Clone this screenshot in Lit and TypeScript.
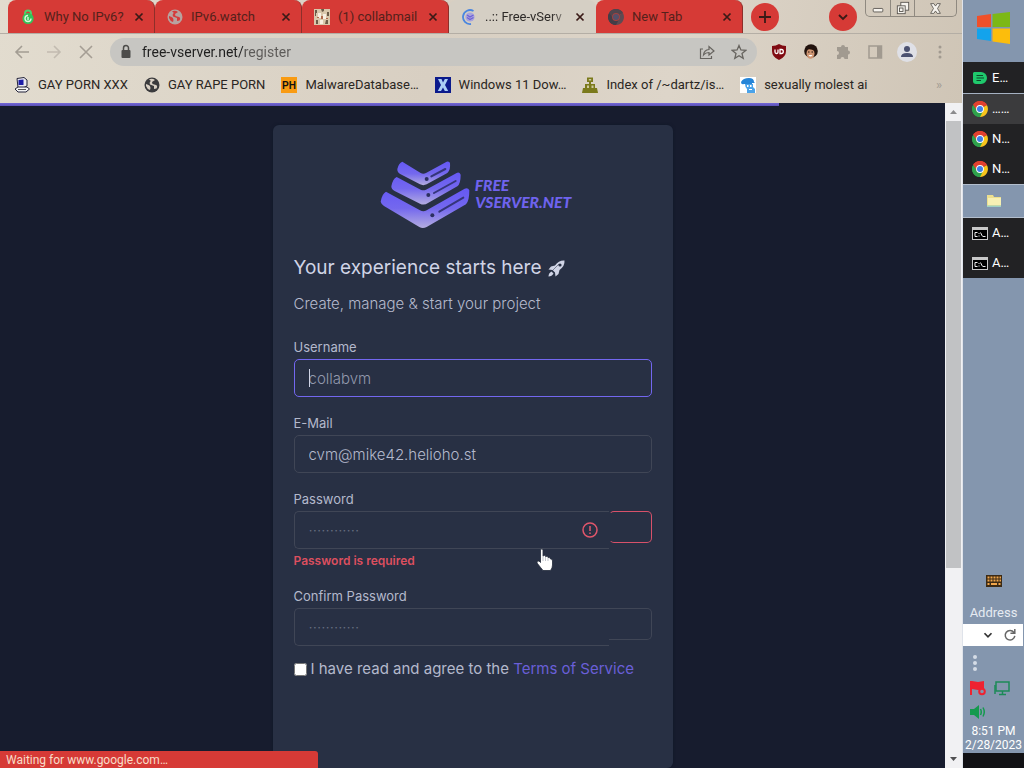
import { LitElement, html, svg, css, nothing } from "lit";
import { customElement } from "lit/decorators.js";
import { classMap } from "lit/directives/class-map.js";
import { styleMap } from "lit/directives/style-map.js";

const icon = (body: unknown, size = 16, box = "0 0 16 16") =>
  html`<svg class="icon" width=${size} height=${size} viewBox=${box} aria-hidden="true">${body}</svg>`;

const chromeLogo = (a: string, b: string, c: string, d: string, ring: string) => svg`
  <path fill=${a} d="M8 8 L1.1 4 A8 8 0 0 1 14.9 4 Z"/>
  <path fill=${b} d="M8 8 L14.9 4 A8 8 0 0 1 8 16 Z"/>
  <path fill=${c} d="M8 8 L8 16 A8 8 0 0 1 1.1 4 Z"/>
  <path fill=${a} d="M8 4.3 H15.1 L14.9 4 A8 8 0 0 0 1.1 4 L4.8 9.8 Z"/>
  <path fill=${c} d="M4.8 9.8 L8 11.7 L11.2 9.8 L8 16 A8 8 0 0 1 1.1 4 Z"/>
  <circle cx="8" cy="8" r="3.9" fill=${ring}/><circle cx="8" cy="8" r="3" fill=${d}/>`;

const closeGlyph = svg`<path d="M4 4 L12 12 M12 4 L4 12" stroke="currentColor" stroke-width="2" fill="none"/>`;

const globe = (bg: string, fg: string) => svg`
  <circle cx="8" cy="8" r="7.5" fill=${bg}/>
  <path fill=${fg} d="M2 7 Q5 8 6 9 Q7 11 6 13 Q3 12 2 9 Z M5 2.5 Q8 1 11 3 L8 5 L8.5 7 L12 8 Q14 9 12.5 11.5 L10 12 L10 9 L6 7.5 Q5 5 7 4 Z"/>`;

const tabs = [
  {
    title: "Why No IPv6?",
    icon: svg`<path d="M5 6 V4.5 A3 3 0 0 1 11 4.5 V6" fill="none" stroke="#4fd06a" stroke-width="2"/><circle cx="8" cy="9.5" r="5.6" fill="#35c25a"/><path d="M8 6.500 A3 3 0 1 0 11 9.500 M8 8 V11" fill="none" stroke="#d8f6d8" stroke-width="1.4"/>`,
  },
  { title: "IPv6.watch", icon: globe("#b8a29f", "#d63a3a") },
  {
    title: "(1) collabmail",
    icon: svg`<rect width="16" height="16" fill="#d9c8ab"/><path fill="#6b5c48" d="M1 1 h2 v3 h-1 v3 h-1z M7 0 h3 v2 l-2 1z M13 3 h2 v4 h-2z M2 11 h2 v4 h-2z M12 11 h2 v4 h-3z"/><path fill="#f7efe0" d="M4 4 h3 v5 h-3z M9 5 h3 v5 h-3z M6 11 h3 v4 h-3z"/><path fill="#b06a4c" d="M7 7 h2 v3 h-2z M3 8 h2 v1 h-2z M12 9 h2 v1 h-2z"/>`,
  },
  {
    title: "..:: Free-vServ",
    active: true,
    icon: svg`<path d="M12.5 2 A7 7 0 1 0 10 15" fill="none" stroke="#4a86e0" stroke-width="1.8"/><circle cx="9" cy="8" r="4.6" fill="#a9a4dc"/><path d="M6 6 L9 8 L12.5 6 M6 8.5 L9 10.5 L12.5 8.5" fill="none" stroke="#6d61d8" stroke-width="1.3"/>`,
  },
  { title: "New Tab", icon: chromeLogo("#50454d", "#5d4a52", "#443d47", "#54506a", "#a5413f") },
];

const bookmarks = [
  {
    title: "GAY PORN XXX",
    icon: svg`<path d="M3 1.5 L10 0.5 L13 3 V9 L10 10.5 H4 Z" fill="#e9e9ef" stroke="#23233a"/><path d="M4.5 3 L9.5 2.5 V8 H4.5 Z" fill="#1d1da8"/><path d="M1 12 L4 10 H13 L15.5 12 L12 15 H4 Z" fill="#f4f4f4" stroke="#23233a"/><path d="M4 12.5 H12" stroke="#555"/>`,
  },
  { title: "GAY RAPE PORN", icon: globe("#3b3b3d", "#d9d0c4") },
  {
    title: "MalwareDatabase…",
    icon: svg`<rect width="16" height="16" fill="#f99b12"/><text x="8" y="12" text-anchor="middle" font-family="Liberation Sans, sans-serif" font-weight="700" font-size="10" fill="#111">PH</text>`,
  },
  {
    title: "Windows 11 Dow…",
    icon: svg`<rect width="16" height="16" fill="#0b1a8c"/><path d="M3 2 H6.5 L8 5.5 L9.8 2 H13 L10 8 L13.2 14 H9.8 L8 10.5 L6 14 H2.8 L6 8 Z" fill="#a9cdf5"/>`,
  },
  {
    title: "Index of /~dartz/is…",
    icon: svg`<g fill="#7b7a1c"><path d="M5 0.5 H11 V5 H5 Z"/><path d="M7 5 H9 V7 H13 V11 H3 V7 H7 Z"/><path d="M1 11 H15 L16 16 H0 Z"/></g><path d="M6.8 2 H9.2 V3.6 H6.8 Z M5 8.5 H7 V11 H5 Z M9.5 8.5 H11.5 V11 H9.5 Z" fill="#cfc9a0"/>`,
  },
  {
    title: "sexually molest ai",
    icon: svg`<rect width="16" height="16" fill="#fff"/><path d="M1 5 Q3 1 9 1 Q14 1 14 5 L15 6 H12 V7 H4 Q1 8 1 5 Z" fill="#2585d8"/><path d="M5 7 H13 V10 L15 12 V16 H7 V12 Q5 10 5 7 Z" fill="#4aa3ea"/><path d="M7 8 h1.5 v2 h-1.5z M10 8 h1.5 v2 h-1.5z M9 12 h3 v1 h-3z" fill="#fff"/>`,
  },
];

const colourChrome = chromeLogo("#e2402f", "#f8c51c", "#2fa24c", "#3f7fe8", "#fff");
const terminal = svg`<rect y="2" width="16" height="13" fill="#c9c9c9"/><rect x="1" y="5" width="14" height="9" fill="#000"/><path d="M5.5 7.5 H3 V11.5 H5.5 M7 8 v1 M7 10.5 v1 M8.5 7.5 L10.5 11.5 M11 11.5 h2.5" stroke="#eee" fill="none"/>`;
const folder = svg`<path d="M1 2 H7 L8 4 H15 V14 H1 Z" fill="#ecdf8e"/><path d="M2 5 H15 V12 H2 Z" fill="#f7f0b4"/><path d="M1 12.5 H15 V14 H1Z" fill="#9fd0c4"/>`;

const tasks = [
  { label: "E…", look: "first", icon: svg`<path d="M2 2 H9 A6 6 0 0 1 9 14 H4 Q1 14 1 11 V3 Z" fill="#1fc96c"/><path d="M4.5 5.5 H11 M4.5 8 H12 M4.5 10.5 H9" stroke="#0b4a2a" stroke-width="1.2"/>` },
  { label: "……", look: "current", icon: colourChrome },
  { label: "N…", look: "", icon: colourChrome },
  { label: "N…", look: "", icon: colourChrome },
  { label: "", look: "folder", icon: folder },
  { label: "A…", look: "", icon: terminal },
  { label: "A…", look: "", icon: terminal },
];

@customElement("browser-chrome")
class BrowserChrome extends LitElement {
  static styles = css`
    :host {
      display: block;
      font: 13px/20px Roboto, "Liberation Sans", sans-serif;
      color: #2a2622;
      background: linear-gradient(100deg, #e2dccf, #d8cfc2 45%, #ddd5c9 70%, #cfc5b6);
    }
    button {
      font: inherit;
      color: inherit;
      background: none;
      border: 0;
      padding: 0;
    }
    .icon {
      display: block;
      flex: none;
    }
    .strip {
      display: flex;
      height: 33px;
      padding-left: 8px;
      border-bottom: 1px solid #b4aea5;
    }
    .tab {
      flex: 0 1 147px;
      min-width: 0;
      display: flex;
      align-items: center;
      padding: 0 8px 0 12px;
      box-sizing: border-box;
      background: #d63a36;
      color: #54211b;
      border-radius: 8px 8px 0 0;
      border-right: 1px solid #8d2f2a;
    }
    .tab.active {
      background: #d5cfc4;
      color: #2d2a28;
      border-color: transparent;
    }
    .tab .name {
      flex: 1;
      min-width: 0;
      margin-left: 8px;
      overflow: hidden;
      white-space: nowrap;
      text-align: left;
    }
    .active .name {
      -webkit-mask-image: linear-gradient(90deg, #000 75%, transparent);
    }
    .tab .x {
      color: #3a1a17;
    }
    .round {
      display: grid;
      place-items: center;
      width: 28px;
      height: 28px;
      margin: 3px 0 0 8px;
      border-radius: 50%;
      background: #d63a36;
      color: #3a1a17;
    }
    .spacer {
      flex: 1;
    }
    .window {
      display: flex;
      height: 16px;
      margin: 0 5px 0 8px;
      border: 1px solid #8f8980;
      border-top: 0;
      border-radius: 0 0 5px 5px;
    }
    .window button {
      display: grid;
      place-items: center;
      width: 24px;
    }
    .window button + button {
      border-left: 1px solid #8f8980;
    }
    .window .wide {
      width: 42px;
    }
    .toolbar {
      display: flex;
      align-items: center;
      height: 36px;
      padding: 0 7px 0 6px;
    }
    .tool {
      display: grid;
      place-items: center;
      width: 32px;
      height: 28px;
      color: #67645f;
    }
    .faint {
      color: #a39d94;
    }
    .omnibox {
      flex: 1;
      display: flex;
      align-items: center;
      height: 28px;
      margin: 0 6px 0 8px;
      padding: 0 2px 0 8px;
      border-radius: 14px;
      background: #c7c6c2;
    }
    .url {
      flex: 1;
      min-width: 0;
      margin-left: 8px;
      padding: 0;
      border: 0;
      outline: 0;
      font: 14px/20px Roboto, "Liberation Sans", sans-serif;
      color: transparent;
      background: linear-gradient(90deg, #1f1f1f 103px, #5c5a58 103px);
      -webkit-background-clip: text;
      background-clip: text;
    }
    .bookmarks {
      display: flex;
      align-items: center;
      gap: 16px;
      height: 30px;
      padding: 0 20px 3px 14px;
    }
    .bookmarks a {
      display: flex;
      align-items: center;
      gap: 8px;
      color: inherit;
      text-decoration: none;
      white-space: nowrap;
    }
  `;

  render() {
    return html`
      <div class="strip" role="tablist">
        ${tabs.map(
          (t) => html`<button class=${classMap({ tab: true, active: !!t.active })} role="tab" aria-selected=${t.active ? "true" : "false"}>
            ${icon(t.icon)}<span class="name">${t.title}</span><span class="x">${icon(closeGlyph, 14)}</span>
          </button>`
        )}
        <button class="round" aria-label="New tab">${icon(svg`<path d="M8 2 V14 M2 8 H14" stroke="currentColor" stroke-width="1.8"/>`)}</button>
        <span class="spacer"></span>
        <button class="round" aria-label="Search tabs">${icon(svg`<path d="M4 6 L8 10 L12 6" fill="none" stroke="currentColor" stroke-width="1.8"/>`)}</button>
        <div class="window">
          <button aria-label="Minimize">${icon(svg`<rect x="2.5" y="8.5" width="11" height="4" rx="1" fill="#f6f3ee" stroke="#56524d"/>`, 14)}</button>
          <button aria-label="Restore">${icon(svg`<g fill="#f6f3ee" stroke="#56524d"><rect x="5.5" y="1.5" width="9" height="9"/><rect x="1.5" y="5.5" width="9" height="9"/><rect x="4" y="8" width="4" height="4"/></g>`, 14)}</button>
          <button class="wide" aria-label="Close">${icon(svg`<path d="M2 2 H6 L8 5 L10 2 H14 L10.5 8 L14 14 H10 L8 11 L6 14 H2 L5.5 8 Z" fill="#f6f3ee" stroke="#56524d"/>`, 13)}</button>
        </div>
      </div>
      <div class="toolbar">
        <button class="tool faint" aria-label="Back">${icon(svg`<path d="M15 8 H2 M8 2 L2 8 L8 14" fill="none" stroke="#a39d93" stroke-width="1.6"/>`)}</button>
        <button class="tool faint" aria-label="Forward">${icon(svg`<path d="M1 8 H14 M8 2 L14 8 L8 14" fill="none" stroke="#c2bbb0" stroke-width="1.6"/>`)}</button>
        <button class="tool faint" aria-label="Stop">${icon(svg`<path d="M2 2 L14 14 M14 2 L2 14" stroke="#a59e94" stroke-width="1.6"/>`)}</button>
        <div class="omnibox">
          ${icon(svg`<rect x="3.5" y="6" width="9" height="8" rx="1" fill="#4d4c4a"/><path d="M5.5 6 V4 A2.5 2.5 0 0 1 10.5 4 V6" fill="none" stroke="#4d4c4a" stroke-width="1.5"/>`)}
          <input class="url" aria-label="Address" value="free-vserver.net/register" />
          <button class="tool" aria-label="Share">${icon(svg`<path d="M4 5 H1.5 V14.5 H12.5 V12 M4.5 11 Q5 6 10 5.5 V2.5 L15 7 L10 11 V8.5 Q6.5 8.5 4.5 11 Z" fill="none" stroke="currentColor" stroke-width="1.2"/>`)}</button>
          <button class="tool" aria-label="Bookmark">${icon(svg`<path d="M8 1.5 L9.9 6 L14.7 6.4 L11 9.6 L12.2 14.3 L8 11.7 L3.8 14.3 L5 9.6 L1.3 6.4 L6.1 6 Z" fill="none" stroke="currentColor" stroke-width="1.3"/>`)}</button>
        </div>
        <button class="tool" aria-label="uBlock Origin">${icon(svg`<path d="M8 0 Q11 2 15 2 V7 Q15 13 8 16 Q1 13 1 7 V2 Q5 2 8 0 Z" fill="#800b12"/><path d="M4 5.5 V8 Q4 9.5 5.5 9.5 Q7 9.5 7 8 V5.5 M9 5.5 V9.5 H10.5 Q12.3 9.5 12.3 7.5 Q12.3 5.5 10.5 5.5 Z" fill="none" stroke="#fff" stroke-width="1.3"/>`)}</button>
        <button class="tool" aria-label="Extension">${icon(svg`<circle cx="8" cy="7" r="6.8" fill="#22130e"/><ellipse cx="7.5" cy="9.5" rx="4" ry="5.2" fill="#cf9673"/><path d="M3 6 Q7 4 12 7 L12 3 L8 1 L4 2.5Z" fill="#22130e"/><path d="M5 8 h1.5 M8.5 8 h1.5" stroke="#22130e"/><path d="M5.5 11 Q7.5 14 9.5 11 Z" fill="#fff"/>`)}</button>
        <button class="tool faint" aria-label="Extensions">${icon(svg`<path d="M6 3 A2 2 0 0 1 10 3 H13 V6.5 A2 2 0 0 1 13 10.5 V15 H9.5 A2 2 0 0 0 5.5 15 H2 V11 A2 2 0 0 0 2 7 V3 Z" fill="#a19a90"/>`)}</button>
        <button class="tool faint" aria-label="Side panel">${icon(svg`<rect x="2" y="2" width="12.5" height="12" fill="none" stroke="#a19a90" stroke-width="1.5"/><rect x="10" y="2" width="4.5" height="12" fill="#a19a90"/>`)}</button>
        <button class="tool" aria-label="Profile">${icon(svg`<circle cx="10" cy="10" r="10" fill="#dfe0e6"/><circle cx="10" cy="7" r="3" fill="#4b5170"/><path d="M4 15 Q4 11 10 11 Q16 11 16 15 Z" fill="#4b5170"/>`, 20, "0 0 20 20")}</button>
        <button class="tool faint" aria-label="Menu">${icon(svg`<g fill="#a19a90"><circle cx="9" cy="3" r="1.5"/><circle cx="9" cy="8" r="1.5"/><circle cx="9" cy="13" r="1.5"/></g>`)}</button>
      </div>
      <nav class="bookmarks">
        ${bookmarks.map((b) => html`<a href="#">${icon(b.icon)}<span>${b.title}</span></a>`)}
        <span class="spacer"></span><span class="faint">»</span>
      </nav>
    `;
  }
}

@customElement("register-card")
class RegisterCard extends LitElement {
  static styles = css`
    :host {
      display: block;
      box-sizing: border-box;
      width: 100%;
      max-width: 400px;
      padding: 32px 21px;
      border-radius: 6px;
      background: #283044;
      box-shadow: 0 0 3px #101829;
      font: 15px/22px Inter, "Open Sans", sans-serif;
      color: #b4b9cc;
    }
    .logo {
      display: block;
      margin: 0 auto 24px;
    }
    h1 {
      display: flex;
      align-items: center;
      gap: 6px;
      margin: 0 0 12px;
      font-size: 19px;
      line-height: 26px;
      font-weight: 400;
      color: #d0d4e6;
    }
    p {
      margin: 0 0 23px;
      font-weight: 300;
    }
    .group {
      margin-bottom: 17px;
    }
    .group:last-of-type {
      margin-bottom: 12px;
    }
    .group label {
      display: block;
      margin-bottom: 3px;
      font-size: 13px;
      line-height: 18px;
    }
    .box {
      position: relative;
      display: flex;
      align-items: flex-start;
    }
    input.field {
      flex: 1;
      min-width: 0;
      height: 38px;
      box-sizing: border-box;
      padding: 0 14px;
      font: inherit;
      font-weight: 300;
      color: #b4b9cc;
      background: none;
      border: 1px solid #404656;
      border-radius: 5px;
      outline: 0;
    }
    input.focused {
      border-color: #7367f0;
    }
    input::placeholder {
      color: #9399ad;
      opacity: 1;
    }
    input.secret {
      border-right: 0;
      border-radius: 5px 0 0 5px;
    }
    .secret::placeholder {
      color: #697083;
    }
    .caret {
      position: absolute;
      left: 15px;
      top: 10px;
      width: 1px;
      height: 18px;
      background: #d0d4e6;
    }
    .reveal {
      width: 43px;
      height: 32px;
      padding: 0;
      background: none;
      border: 1px solid #404656;
      border-left: 0;
      border-radius: 0 5px 5px 0;
    }
    .invalid .reveal {
      border: 1px solid #d8516a;
      border-left-color: transparent;
      border-radius: 5px;
    }
    .alert {
      position: absolute;
      right: 54px;
      top: 11px;
    }
    .error {
      margin: 3px 0 0;
      font-size: 12px;
      line-height: 18px;
      font-weight: 600;
      color: #dc4f5f;
    }
    .agree {
      display: flex;
      align-items: center;
      gap: 4px;
      white-space: nowrap;
    }
    .agree input {
      width: 13px;
      height: 13px;
      margin: 0;
      flex: none;
    }
    .agree a {
      color: #6a5fd8;
      text-decoration: none;
    }
  `;

  private chevron(id: string, outline: string, slot: string, cx: number, cy: number) {
    return svg`<path d=${outline} fill="url(#${id})"/><path d=${slot} stroke="#35357a" stroke-width="6" stroke-linecap="round"/><circle cx=${cx} cy=${cy} r="6" fill="#2c3060"/>`;
  }

  private password(id: string, label: string, invalid: boolean) {
    return html`
      <label for=${id}>${label}</label>
      <div class=${classMap({ box: true, invalid })}>
        <input class="field secret" id=${id} type="password" placeholder="············" />
        <button class="reveal" type="button" aria-label="Show password"></button>
        ${invalid
          ? html`<svg class="alert" width="16" height="16" viewBox="0 0 16 16" aria-hidden="true"><circle cx="8" cy="8" r="7" fill="none" stroke="#e0566b" stroke-width="1.5"/><path d="M8 4 V9 M8 10.5 V12" stroke="#e0566b" stroke-width="1.5"/></svg>`
          : nothing}
      </div>`;
  }

  render() {
    return html`
      <svg class="logo" width="202" height="74" viewBox="6 20 606 222" role="img" aria-label="Free vServer.net">
        <defs>
          ${[["a", 34, 106], ["b", 66, 164], ["c", 114, 234]].map(
            ([id, y1, y2]) => svg`<linearGradient id=${id} gradientUnits="userSpaceOnUse" x1="160" y1=${y1} x2="160" y2=${y2}><stop offset="0" stop-color="#6558f5"/><stop offset=".5" stop-color="#7468ee"/><stop offset="1" stop-color="#b5aee0"/></linearGradient>`
          )}
        </defs>
        ${this.chevron("a", "M97 34 Q86 38 82 56 Q81 66 92 72 L150 102 Q160 107 170 102 L232 68 Q242 60 240 38 Q238 32 230 34 L168 68 Q160 73 152 68 Z", "M184 78 L226 56", 170, 86)}
        ${this.chevron("b", "M80 80 Q68 86 64 108 Q64 117 74 122 L150 160 Q162 166 174 158 L262 108 Q272 100 272 73 Q268 64 260 68 L168 118 Q160 122 152 118 Z", "M192 128 L257 92", 175, 134)}
        ${this.chevron("c", "M48 124 Q36 130 32 154 Q34 162 42 167 L148 230 Q158 236 170 230 L288 162 Q298 152 298 120 Q294 111 284 115 L170 180 Q160 186 150 180 Z", "M208 184 L280 142", 187, 195)}
        <g font-family="Lato, sans-serif" font-weight="900" font-style="italic" font-size="47" fill="#6f63ee">
          <text x="314" y="123">FREE</text>
          <text x="316" y="174">VSERVER.NET</text>
        </g>
      </svg>
      <h1>
        Your experience starts here
        <svg width="17" height="17" viewBox="0 0 17 17" aria-hidden="true"><path d="M16.5 0.5 Q17 6 11.5 10 L10.5 14 L7.5 16.5 L7 12.5 L4.5 10 L0.5 9.5 L3 6.5 L7 5.5 Q11 0 16.5 0.5 Z M3.5 11.5 L5.5 13.5 Q4 16.5 0.5 16.5 Q0.5 13 3.5 11.5 Z" fill="#d0d4e6"/><circle cx="12" cy="5" r="1.6" fill="#283044"/><path d="M5 10 L11 4" stroke="#283044" stroke-width=".5"/></svg>
      </h1>
      <p>Create, manage &amp; start your project</p>
      <form>
        <div class="group">
          <label for="username">Username</label>
          <div class="box"><input class="field focused" id="username" type="text" placeholder="collabvm" /><span class="caret"></span></div>
        </div>
        <div class="group">
          <label for="email">E-Mail</label>
          <div class="box"><input class="field" id="email" type="email" value="cvm@mike42.helioho.st" /></div>
        </div>
        <div class="group">
          ${this.password("password", "Password", true)}
          <div class="error">Password is required</div>
        </div>
        <div class="group">${this.password("confirm", "Confirm Password", false)}</div>
        <footer class="agree">
          <input type="checkbox" id="agree" />
          <label for="agree">I have read and agree to the <a href="#">Terms of Service</a></label>
        </footer>
      </form>
    `;
  }
}

@customElement("task-panel")
class TaskPanel extends LitElement {
  static styles = css`
    :host {
      display: flex;
      flex-direction: column;
      border-left: 1px solid #dfe3ea;
      background: #8496ae;
      color: #fff;
      font: 13px/16px Roboto, "Liberation Sans", sans-serif;
    }
    .icon {
      display: block;
      flex: none;
    }
    button {
      font: inherit;
      color: inherit;
      border: 0;
      padding: 0;
      background: none;
    }
    .start {
      display: grid;
      place-items: center;
      height: 62px;
      padding-bottom: 6px;
    }
    .task {
      display: flex;
      align-items: center;
      gap: 4px;
      height: 30px;
      padding: 0 9px;
      background: #222224;
      white-space: nowrap;
    }
    .first {
      height: 32px;
      border-bottom: 1px solid #a5b1c2;
    }
    .current {
      background: #3b3b3d;
    }
    .folder {
      height: 34px;
      justify-content: center;
      border: 1px solid #b3becd;
      border-width: 1px 0;
      background: #8496ae;
    }
    .fill {
      flex: 1;
    }
    .keyboard {
      margin: 0 auto 18px;
    }
    .address {
      margin-bottom: 3px;
      text-align: center;
      color: #e6ebf2;
    }
    .go {
      display: flex;
      align-items: center;
      justify-content: flex-end;
      gap: 8px;
      height: 22px;
      padding-right: 6px;
      margin-right: 1px;
      background: #fff;
    }
    .tray {
      display: grid;
      grid-template-columns: 16px 16px;
      gap: 8px;
      padding: 8px 7px 4px;
    }
    .grip {
      grid-column: 1 / -1;
    }
    .clock {
      padding-bottom: 1px;
      text-align: center;
      font-size: 12px;
      line-height: 14px;
      white-space: nowrap;
    }
    .edge {
      height: 15px;
      background: #111114;
    }
  `;

  render() {
    return html`
      <button class="start" aria-label="Start">
        ${icon(svg`<path d="M0 4 L14 2 V15 H0 Z" fill="#f0502a"/><path d="M15.5 2 L33 0 V15 H15.5 Z" fill="#7cb816"/><path d="M0 16.5 H14 V29 L0 27 Z" fill="#13a3ec"/><path d="M15.5 16.5 H33 V32 L15.5 29.5 Z" fill="#fcbd0c"/>`, 33, "0 0 33 33")}
      </button>
      ${tasks.map(
        (t) => html`<button class="task ${t.look}" aria-label=${t.label || "Folder"}>${icon(t.icon)}${t.label ? html`<span>${t.label}</span>` : nothing}</button>`
      )}
      <div class="fill"></div>
      <svg class="keyboard" width="16" height="12" viewBox="0 0 16 12" aria-hidden="true"><rect width="16" height="12" fill="#3c2a14"/><path d="M1.5 2.5 H15 M1.5 5.5 H15" stroke="#f2a64a" stroke-width="2" stroke-dasharray="2 1"/><path d="M1.5 9 H3.5 M5 9 H11 M12.5 9 H14.5" stroke="#f2a64a" stroke-width="2"/></svg>
      <div class="address">Address</div>
      <div class="go">
        ${icon(svg`<path d="M4 6 L8 10 L12 6" fill="none" stroke="#333" stroke-width="2"/>`, 14)}
        ${icon(svg`<path d="M12.5 5 A5.5 5.5 0 1 0 13.5 9 M13.5 1 V6 H8.5" fill="none" stroke="#666" stroke-width="1.7"/>`, 14)}
      </div>
      <div class="tray">
        <svg class="grip" width="12" height="18" viewBox="0 0 12 18" aria-hidden="true"><g fill="#d5dce6"><circle cx="5" cy="3" r="2"/><circle cx="5" cy="9" r="2"/><circle cx="5" cy="15" r="2"/></g></svg>
        ${icon(svg`<path d="M0 1 H2 V15 H0 Z M2 1 L8 2 L14 1 V9 L8 10 L2 9 Z" fill="#ee2230"/><circle cx="12" cy="11.5" r="2.8" fill="#8496ae" stroke="#ee2230" stroke-width="2"/>`)}
        ${icon(svg`<rect x="2" y="2" width="13" height="9" fill="none" stroke="#1c8a58" stroke-width="1.5"/><path d="M8.5 11 V14 M5 14.5 H12 M1 5 V14" stroke="#1c8a58" stroke-width="1.5"/>`)}
        ${icon(svg`<path d="M0 5 H4 L9 1 V15 L4 11 H0 Z" fill="#149a4e"/><path d="M10.5 5 Q12 8 10.5 11 M13 3.5 Q15.5 8 13 12.5" fill="none" stroke="#149a4e" stroke-width="1.5"/>`)}
      </div>
      <div class="clock">8:51 PM<br />2/28/2023</div>
      <div class="edge"></div>
    `;
  }
}

@customElement("app-root")
class AppRoot extends LitElement {
  static styles = css`
    :host {
      display: grid;
      grid-template-columns: minmax(0, 1fr) 62px;
      height: 100vh;
      overflow: hidden;
    }
    .browser {
      display: flex;
      flex-direction: column;
      min-height: 0;
    }
    .view {
      position: relative;
      flex: 1;
      min-height: 0;
      display: flex;
      overflow: hidden;
      background: #171c2e;
    }
    .page {
      position: relative;
      flex: 1;
      display: flex;
      justify-content: center;
      padding-top: 22px;
    }
    .progress {
      position: absolute;
      left: 0;
      top: 0;
      height: 3px;
      background: linear-gradient(#7367d8, #5a50b4);
    }
    .status {
      position: absolute;
      left: 0;
      bottom: 0;
      width: 312px;
      height: 17px;
      padding-left: 6px;
      border-radius: 0 3px 0 0;
      background: #d63a36;
      color: #f8dcc8;
      font: 12px/18px Roboto, "Liberation Sans", sans-serif;
    }
    .pointer {
      position: absolute;
      left: 536px;
      top: 445px;
    }
    .scroll {
      display: flex;
      flex-direction: column;
      width: 17px;
      background: #f1f1f3;
    }
    .scroll svg {
      display: block;
    }
    .thumb {
      margin: 0 1px;
      background: #c1c2c4;
    }
  `;

  render() {
    return html`
      <div class="browser">
        <browser-chrome></browser-chrome>
        <div class="view">
          <main class="page">
            <register-card></register-card>
            <div class="progress" style=${styleMap({ width: "82.4%" })}></div>
          </main>
          <div class="scroll" aria-hidden="true">
            <svg width="17" height="18" viewBox="0 0 17 18"><path d="M5 11 H12 L8.5 7 Z" fill="#8b8b8d"/></svg>
            <div class="thumb" style=${styleMap({ flex: "71 1 0" })}></div>
            <div style=${styleMap({ flex: "29 1 0" })}></div>
            <svg width="17" height="18" viewBox="0 0 17 18"><path d="M5 7 H12 L8.5 11 Z" fill="#505052"/></svg>
          </div>
          <div class="status">Waiting for www.google.com…</div>
          <svg class="pointer" width="18" height="24" viewBox="0 0 18 24" aria-hidden="true"><path d="M4.5 1.5 Q6.5 0 7 2 V8 Q9 6.5 9.5 8.5 Q11.5 7.5 12 9.5 Q14 8.5 14.5 11 Q16.5 10.5 16.5 13 V17 Q16.5 20 14.5 22.5 H7 Q5 20 1 15 Q0.5 12.5 3 13 L4.5 14.5 Z" fill="#fff" stroke="#222a3a" stroke-width=".8"/><path d="M7 8 V13 M9.5 9 V13 M12 10 V13" stroke="#a8adb8" stroke-width=".7"/></svg>
        </div>
      </div>
      <task-panel></task-panel>
    `;
  }
}
